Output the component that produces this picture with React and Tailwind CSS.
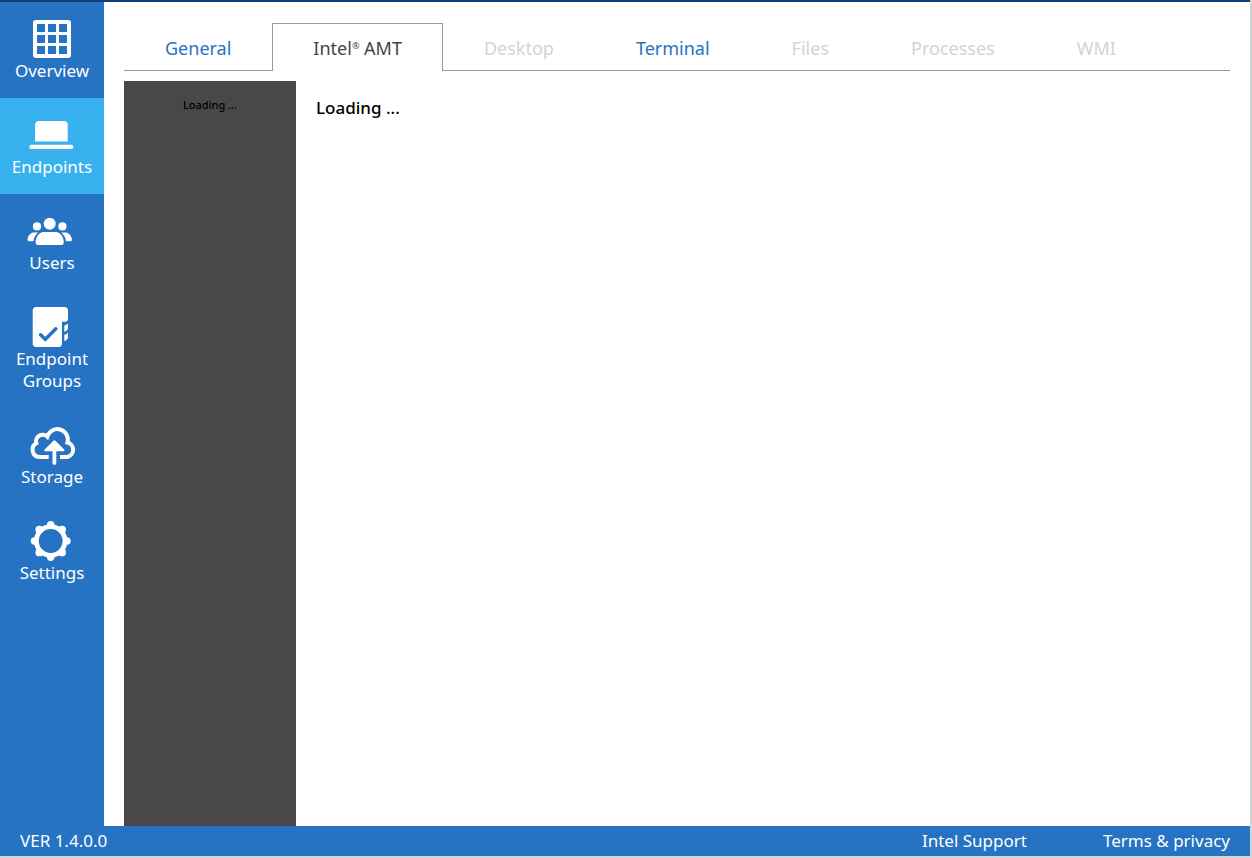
import React from "react";

const iconClass = "h-10 w-12 overflow-visible";

function OverviewIcon() {
  return (
    <svg viewBox="0 0 48 40" className={iconClass} fill="currentColor" aria-hidden="true">
      <path
        fillRule="evenodd"
        d="M8 2H40a3 3 0 0 1 3 3V37a3 3 0 0 1-3 3H8a3 3 0 0 1-3-3V5a3 3 0 0 1 3-3ZM9 6v8h8V6ZM20 6v8h8V6ZM31 6v8h8V6ZM9 17v8h8v-8ZM20 17v8h8v-8ZM31 17v8h8v-8ZM9 28v8h8v-8ZM20 28v8h8v-8ZM31 28v8h8v-8Z"
      />
    </svg>
  );
}

function EndpointsIcon() {
  return (
    <svg viewBox="0 0 48 40" className={iconClass} fill="currentColor" aria-hidden="true">
      <path d="M11 7H36a3.7 3.7 0 0 1 3.7 3.7V27.4H7V10.7A3.7 3.7 0 0 1 11 7Z" />
      <rect x="1.3" y="30.7" width="44" height="4.3" rx="2.1" />
    </svg>
  );
}

function UsersIcon() {
  return (
    <svg viewBox="0 0 48 40" className={iconClass} fill="currentColor" aria-hidden="true">
      <circle cx="21.7" cy="13.8" r="6" />
      <circle cx="9" cy="16.4" r="4.1" />
      <circle cx="34.4" cy="16.4" r="4.1" />
      <path d="M14.5 22H29c3.5 1.2 6.2 4.6 6.7 9v2a2 2 0 0 1-2 2H9.7a2 2 0 0 1-2-2v-2c.5-4.4 3.3-7.8 6.8-9Z" />
      <path d="M4.6 22.5h5.6C7.6 24.5 5.8 27.5 5.4 31.2H.8A1.4 1.4 0 0 1-.6 29.8C-.4 26.5 1.7 23.7 4.6 22.5Z" />
      <path d="M38.8 22.5h-5.6c2.6 2 4.4 5 4.8 8.7h4.6a1.4 1.4 0 0 0 1.4-1.4C43.8 26.5 41.7 23.7 38.8 22.5Z" />
    </svg>
  );
}

function GroupsIcon() {
  return (
    <svg viewBox="0 0 48 40" className={iconClass} fill="currentColor" aria-hidden="true">
      <path d="M8.2 1H36.5A3.5 3.5 0 0 1 40 4.5V12.5a3.2 3.2 0 0 1-3.2 3.2H34V37.5A3.5 3.5 0 0 1 30.5 41H8.2A3.5 3.5 0 0 1 4.7 37.5V4.5A3.5 3.5 0 0 1 8.2 1Z" />
      <path d="M36.3 19.5q2.7-.3 3.7-2.2V22q-.4 2.8-3.7 3.7Z" />
      <path d="M36.3 28.8q2.7-.3 3.7-2.2V31.3q-.4 2.8-3.7 3.7Z" />
      <path
        d="M12.6 28.8 17.3 33.2 27.8 22.8"
        className="stroke-[#2573c2]"
        fill="none"
        strokeWidth="3.6"
        strokeLinecap="round"
        strokeLinejoin="miter"
      />
    </svg>
  );
}

function StorageIcon() {
  return (
    <svg viewBox="0 0 48 40" className={iconClass} fill="none" stroke="currentColor" aria-hidden="true">
      <path
        d="M20.7 33H11.3A7.3 7.3 0 0 1 8.4 19.3 6.5 6.5 0 0 1 19.2 12.7 10.4 10.4 0 0 1 39.4 18.5 7.4 7.4 0 0 1 39 33H32"
        strokeWidth="4"
      />
      <path d="M26.4 26V38.9" strokeWidth="3.8" strokeLinecap="round" />
      <path d="M26.4 17.3 17.3 26.2H35.5Z" fill="currentColor" strokeWidth="2" strokeLinejoin="round" />
    </svg>
  );
}

function SettingsIcon() {
  return (
    <svg viewBox="0 0 48 40" className={iconClass} fill="currentColor" aria-hidden="true">
      <circle cx="22.7" cy="21" r="14.3" fill="none" stroke="currentColor" strokeWidth="4.8" />
      <circle cx="22.7" cy="4.7" r="3.7" />
      <circle cx="22.7" cy="37.3" r="3.7" />
      <circle cx="6.4" cy="21" r="3.7" />
      <circle cx="39" cy="21" r="3.7" />
      <circle cx="11.3" cy="9.6" r="3.9" />
      <circle cx="34.1" cy="9.6" r="3.9" />
      <circle cx="11.3" cy="32.4" r="3.9" />
      <circle cx="34.1" cy="32.4" r="3.9" />
    </svg>
  );
}

const sections = [
  { label: "Overview", Icon: OverviewIcon },
  { label: "Endpoints", Icon: EndpointsIcon, active: true },
  { label: "Users", Icon: UsersIcon },
  { label: "Endpoint Groups", Icon: GroupsIcon },
  { label: "Storage", Icon: StorageIcon },
  { label: "Settings", Icon: SettingsIcon },
];

const amtLabel = (
  <>
    Intel<span className="align-[6px] text-[9px] leading-none">®</span> AMT
  </>
);

const tabs = [
  { id: "general", label: "General", state: "link" },
  { id: "amt", label: amtLabel, state: "active" },
  { id: "desktop", label: "Desktop", state: "disabled" },
  { id: "terminal", label: "Terminal", state: "link" },
  { id: "files", label: "Files", state: "disabled" },
  { id: "processes", label: "Processes", state: "disabled" },
  { id: "wmi", label: "WMI", state: "disabled" },
];

const tabStyles = {
  link: "border-b px-[41px] pt-[3px] text-[#2573c2]",
  active: "border-x border-t px-10 pt-px text-[#444444]",
  disabled: "border-b px-[41px] pt-[3px] text-[#d3d3d3]",
};

export default function App() {
  return (
    <div className="flex min-h-screen flex-col border-r-2 border-b-2 border-[#d2d7d6] bg-white font-['Noto_Sans',sans-serif]">
      <div className="h-0.5 bg-[#113e74]" />
      <div className="flex flex-1">
        <nav aria-label="Sections" className="w-26 shrink-0 bg-[#2573c2]">
          {sections.map(({ label, Icon, active }) => (
            <a
              key={label}
              href="#"
              aria-current={active ? "page" : undefined}
              className={`flex flex-col items-center gap-0.5 px-2 py-4 text-center text-[17px] leading-[22px] text-white ${
                active ? "bg-[#38b1ef]" : ""
              }`}
            >
              <Icon />
              <span>{label}</span>
            </a>
          ))}
        </nav>
        <main className="flex min-w-0 flex-1 flex-col px-5 pt-[21px]">
          <div role="tablist" className="flex">
            {tabs.map(({ id, label, state }) => (
              <button
                key={id}
                type="button"
                role="tab"
                aria-selected={state === "active"}
                disabled={state === "disabled"}
                className={`h-12 border-[#999999] text-lg whitespace-nowrap ${tabStyles[state]}`}
              >
                {label}
              </button>
            ))}
            <div className="flex-1 border-b border-[#999999]" />
          </div>
          <div className="mt-2.5 flex flex-1 text-black">
            <aside className="w-43 shrink-0 bg-[#484848] pt-4 text-center text-[11px] leading-4 font-medium">
              Loading ...
            </aside>
            <section className="px-5 pt-3 text-[17px] leading-[30px] font-medium">Loading ...</section>
          </div>
        </main>
      </div>
      <footer className="flex h-[30px] items-center justify-between bg-[#2573c2] px-5 text-[17px] leading-[22px] text-white">
        <span>VER 1.4.0.0</span>
        <div className="flex gap-19">
          <a href="#">Intel Support</a>
          <a href="#">Terms &amp; privacy</a>
        </div>
      </footer>
    </div>
  );
}
